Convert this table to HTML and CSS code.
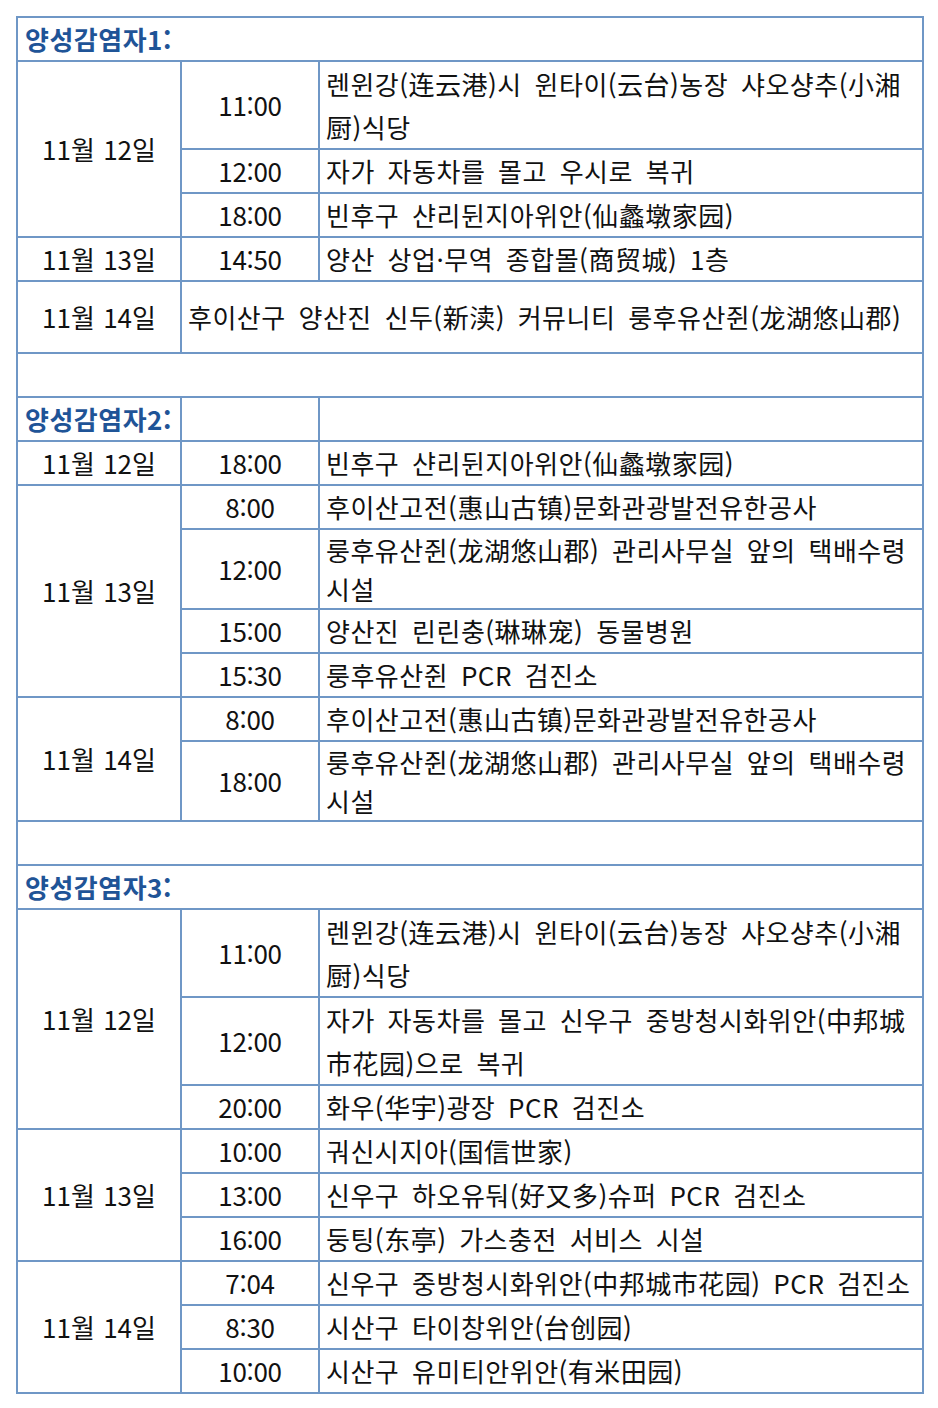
FILE: index.html
```html
<!DOCTYPE html>
<html lang="ko">
<head>
<meta charset="utf-8">
<link rel="stylesheet" href="styles.css">
</head>
<body>
<table class="sched">
  <colgroup><col class="c1"><col class="c2"><col class="c3"></colgroup>
  <tr class="h44"><td class="head" colspan="3">양성감염자1:</td></tr>
  <tr class="h88"><td class="date" rowspan="3">11월 12일</td><td class="time">11:00</td><td class="place l44">렌윈강(连云港)시 윈타이(云台)농장 샤오샹추(小湘<br>厨)식당</td></tr>
  <tr class="h44"><td class="time">12:00</td><td class="place">자가 자동차를 몰고 우시로 복귀</td></tr>
  <tr class="h44"><td class="time">18:00</td><td class="place">빈후구 샨리뒨지아위안(仙蠡墩家园)</td></tr>
  <tr class="h44"><td class="date">11월 13일</td><td class="time">14:50</td><td class="place">양산 상업·무역 종합몰(商贸城) 1층</td></tr>
  <tr class="h72"><td class="date">11월 14일</td><td class="place wide" colspan="2">후이산구 양산진 신두(新渎) 커뮤니티 룽후유산쥔(龙湖悠山郡)</td></tr>
  <tr class="h44"><td colspan="3"></td></tr>

  <tr class="h44"><td class="head">양성감염자2:</td><td></td><td></td></tr>
  <tr class="h44"><td class="date">11월 12일</td><td class="time">18:00</td><td class="place">빈후구 샨리뒨지아위안(仙蠡墩家园)</td></tr>
  <tr class="h44"><td class="date" rowspan="4">11월 13일</td><td class="time">8:00</td><td class="place">후이산고전(惠山古镇)문화관광발전유한공사</td></tr>
  <tr class="h80"><td class="time">12:00</td><td class="place l40">룽후유산쥔(龙湖悠山郡) 관리사무실 앞의 택배수령<br>시설</td></tr>
  <tr class="h44"><td class="time">15:00</td><td class="place">양산진 린린충(琳琳宠) 동물병원</td></tr>
  <tr class="h44"><td class="time">15:30</td><td class="place">룽후유산쥔 PCR 검진소</td></tr>
  <tr class="h44"><td class="date" rowspan="2">11월 14일</td><td class="time">8:00</td><td class="place">후이산고전(惠山古镇)문화관광발전유한공사</td></tr>
  <tr class="h80"><td class="time">18:00</td><td class="place l40">룽후유산쥔(龙湖悠山郡) 관리사무실 앞의 택배수령<br>시설</td></tr>
  <tr class="h44"><td colspan="3"></td></tr>

  <tr class="h44"><td class="head" colspan="3">양성감염자3:</td></tr>
  <tr class="h88"><td class="date" rowspan="3">11월 12일</td><td class="time">11:00</td><td class="place l44">렌윈강(连云港)시 윈타이(云台)농장 샤오샹추(小湘<br>厨)식당</td></tr>
  <tr class="h88"><td class="time">12:00</td><td class="place l44">자가 자동차를 몰고 신우구 중방청시화위안(中邦城<br>市花园)으로 복귀</td></tr>
  <tr class="h44"><td class="time">20:00</td><td class="place">화우(华宇)광장 PCR 검진소</td></tr>
  <tr class="h44"><td class="date" rowspan="3">11월 13일</td><td class="time">10:00</td><td class="place">궈신시지아(国信世家)</td></tr>
  <tr class="h44"><td class="time">13:00</td><td class="place">신우구 하오유둬(好又多)슈퍼 PCR 검진소</td></tr>
  <tr class="h44"><td class="time">16:00</td><td class="place">둥팅(东亭) 가스충전 서비스 시설</td></tr>
  <tr class="h44"><td class="date" rowspan="3">11월 14일</td><td class="time">7:04</td><td class="place">신우구 중방청시화위안(中邦城市花园) PCR 검진소</td></tr>
  <tr class="h44"><td class="time">8:30</td><td class="place">시산구 타이창위안(台创园)</td></tr>
  <tr class="h44"><td class="time">10:00</td><td class="place">시산구 유미티안위안(有米田园)</td></tr>
</table>
</body>
</html>
```

FILE: styles.css
```css
html, body {
  margin: 0;
  padding: 0;
  background: #ffffff;
}
body {
  padding: 16px 0 0 16px;
}
.sched {
  border-collapse: collapse;
  table-layout: fixed;
  width: 906px;
  font-family: "Noto Sans CJK KR", "Noto Sans", sans-serif;
  font-size: 26px;
  color: #111111;
}
.c1 { width: 164px; }
.c2 { width: 138px; }
.c3 { width: 604px; }
.sched td {
  border: 2px solid #6f97c6;
  padding: 0;
  line-height: 42px;
  vertical-align: middle;
  white-space: nowrap;
}
.h44 td { height: 42px; }
.h72 td { height: 70px; }
.h80 td { height: 78px; }
.h88 td { height: 86px; }
.sched td.head {
  color: #1f5497;
  font-weight: bold;
  font-size: 26px;
  letter-spacing: 0.5px;
  padding-left: 7px;
}
.date {
  text-align: center;
  word-spacing: 1px;
}
.time {
  text-align: center;
  letter-spacing: -0.3px;
}
.sched td.place {
  padding-left: 6px;
  text-align: left;
  letter-spacing: 0.5px;
  word-spacing: 5px;
}
.sched td.l44 { line-height: 43px; }
.sched td.l40 { line-height: 39px; }
```
